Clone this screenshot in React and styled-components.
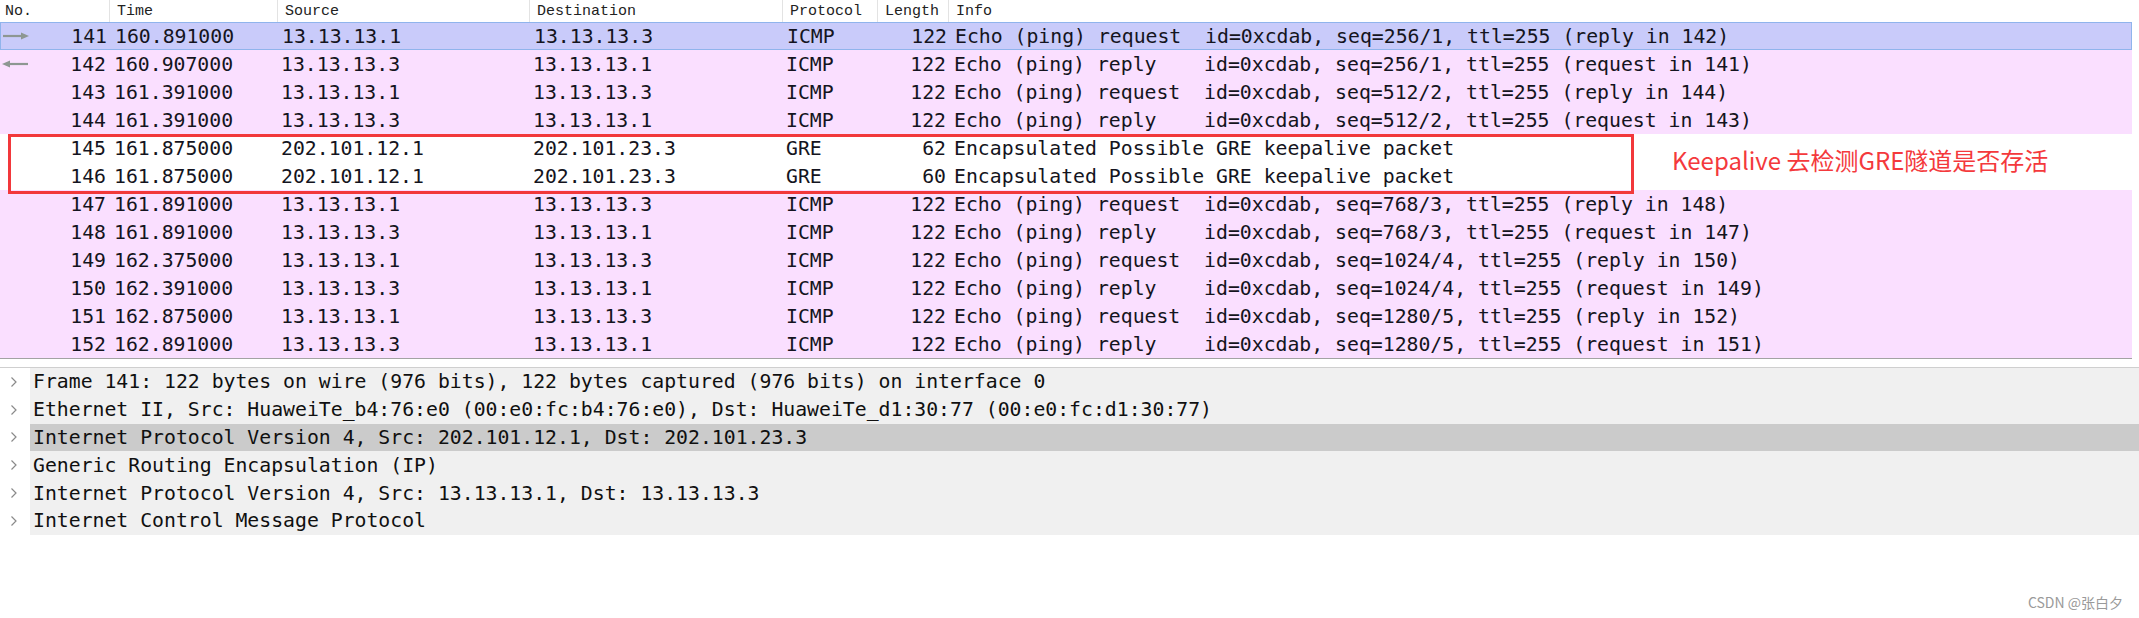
import styled, { createGlobalStyle } from 'styled-components';

const GlobalStyle = createGlobalStyle`
  html, body {
    margin: 0;
    padding: 0;
    background: #ffffff;
  }
`;

const packets = [
  { no: 141, time: '160.891000', src: '13.13.13.1', dst: '13.13.13.3', proto: 'ICMP', len: 122, info: 'Echo (ping) request  id=0xcdab, seq=256/1, ttl=255 (reply in 142)', kind: 'selected', arrow: 'right' },
  { no: 142, time: '160.907000', src: '13.13.13.3', dst: '13.13.13.1', proto: 'ICMP', len: 122, info: 'Echo (ping) reply    id=0xcdab, seq=256/1, ttl=255 (request in 141)', kind: 'icmp', arrow: 'left' },
  { no: 143, time: '161.391000', src: '13.13.13.1', dst: '13.13.13.3', proto: 'ICMP', len: 122, info: 'Echo (ping) request  id=0xcdab, seq=512/2, ttl=255 (reply in 144)', kind: 'icmp' },
  { no: 144, time: '161.391000', src: '13.13.13.3', dst: '13.13.13.1', proto: 'ICMP', len: 122, info: 'Echo (ping) reply    id=0xcdab, seq=512/2, ttl=255 (request in 143)', kind: 'icmp' },
  { no: 145, time: '161.875000', src: '202.101.12.1', dst: '202.101.23.3', proto: 'GRE', len: 62, info: 'Encapsulated Possible GRE keepalive packet', kind: 'plain' },
  { no: 146, time: '161.875000', src: '202.101.12.1', dst: '202.101.23.3', proto: 'GRE', len: 60, info: 'Encapsulated Possible GRE keepalive packet', kind: 'plain' },
  { no: 147, time: '161.891000', src: '13.13.13.1', dst: '13.13.13.3', proto: 'ICMP', len: 122, info: 'Echo (ping) request  id=0xcdab, seq=768/3, ttl=255 (reply in 148)', kind: 'icmp' },
  { no: 148, time: '161.891000', src: '13.13.13.3', dst: '13.13.13.1', proto: 'ICMP', len: 122, info: 'Echo (ping) reply    id=0xcdab, seq=768/3, ttl=255 (request in 147)', kind: 'icmp' },
  { no: 149, time: '162.375000', src: '13.13.13.1', dst: '13.13.13.3', proto: 'ICMP', len: 122, info: 'Echo (ping) request  id=0xcdab, seq=1024/4, ttl=255 (reply in 150)', kind: 'icmp' },
  { no: 150, time: '162.391000', src: '13.13.13.3', dst: '13.13.13.1', proto: 'ICMP', len: 122, info: 'Echo (ping) reply    id=0xcdab, seq=1024/4, ttl=255 (request in 149)', kind: 'icmp' },
  { no: 151, time: '162.875000', src: '13.13.13.1', dst: '13.13.13.3', proto: 'ICMP', len: 122, info: 'Echo (ping) request  id=0xcdab, seq=1280/5, ttl=255 (reply in 152)', kind: 'icmp' },
  { no: 152, time: '162.891000', src: '13.13.13.3', dst: '13.13.13.1', proto: 'ICMP', len: 122, info: 'Echo (ping) reply    id=0xcdab, seq=1280/5, ttl=255 (request in 151)', kind: 'icmp' },
];

const details = [
  'Frame 141: 122 bytes on wire (976 bits), 122 bytes captured (976 bits) on interface 0',
  'Ethernet II, Src: HuaweiTe_b4:76:e0 (00:e0:fc:b4:76:e0), Dst: HuaweiTe_d1:30:77 (00:e0:fc:d1:30:77)',
  'Internet Protocol Version 4, Src: 202.101.12.1, Dst: 202.101.23.3',
  'Generic Routing Encapsulation (IP)',
  'Internet Protocol Version 4, Src: 13.13.13.1, Dst: 13.13.13.3',
  'Internet Control Message Protocol',
];

const columns = '109px 168px 252px 253px 95px 71px 1fr';

const rowBg = {
  selected: '#c9cbfa',
  icmp: '#fadfff',
  plain: '#ffffff',
};

const Page = styled.div`
  position: relative;
  width: 2139px;
  height: 618px;
  overflow: hidden;
  background: #ffffff;
`;

const PacketList = styled.div`
  position: relative;
  width: 2132px;
  border-bottom: 1px solid #a3a3a3;
`;

const HeaderRow = styled.div`
  display: grid;
  grid-template-columns: ${columns};
  height: 22px;
  background: #ffffff;
`;

const HeaderCell = styled.div`
  display: flex;
  align-items: center;
  padding-left: ${(p) => (p.$first ? '5px' : '7px')};
  border-left: ${(p) => (p.$first ? 'none' : '1px solid #e3e3e3')};
  font-family: 'Liberation Mono', monospace;
  font-size: 15px;
  color: #222;
`;

const Row = styled.div`
  display: grid;
  grid-template-columns: ${columns};
  height: 28px;
  box-sizing: border-box;
  background: ${(p) => rowBg[p.$kind]};
  border: ${(p) => (p.$kind === 'selected' ? '1px solid #90b4ec' : 'none')};
  font-family: 'DejaVu Sans Mono', monospace;
  font-size: 19.8px;
  color: #141420;
  white-space: pre;
`;

const Cell = styled.div`
  display: flex;
  align-items: center;
  justify-content: ${(p) => (p.$right ? 'flex-end' : 'flex-start')};
  padding-left: ${(p) => p.$pl || 0}px;
  padding-right: ${(p) => p.$pr || 0}px;
  overflow: hidden;
`;

const NoCell = styled(Cell)`
  position: relative;
`;

const ArrowMark = styled.svg`
  position: absolute;
  left: 1px;
  top: 50%;
  transform: translateY(-50%);
`;

const Splitter = styled.div`
  height: 8px;
  background: #ffffff;
`;

const DetailPane = styled.div`
  border-top: 1px solid #cfcfcf;
  display: flex;
  flex-direction: column;
`;

const DetailRow = styled.div`
  display: flex;
  align-items: center;
  height: 27.8px;
`;

const Chevron = styled.div`
  width: 30px;
  height: 100%;
  display: flex;
  align-items: center;
  padding-left: 10px;
  box-sizing: border-box;
  background: #ffffff;
`;

const DetailText = styled.div`
  flex: 1;
  height: 100%;
  display: flex;
  align-items: center;
  padding-left: 3px;
  background: ${(p) => (p.$active ? '#cbcbcb' : '#f0f0f0')};
  font-family: 'DejaVu Sans Mono', monospace;
  font-size: 19.8px;
  color: #101010;
  white-space: pre;
`;

const Highlight = styled.div`
  position: absolute;
  left: 8px;
  top: 134px;
  width: 1626px;
  height: 60px;
  box-sizing: border-box;
  border: 3px solid #f2383b;
  pointer-events: none;
`;

const Note = styled.div`
  position: absolute;
  left: 1672px;
  top: 144px;
  font-family: 'Noto Sans CJK SC', 'Noto Sans', sans-serif;
  font-size: 24px;
  line-height: 32px;
  color: #f4393c;
  white-space: nowrap;
`;

const Watermark = styled.div`
  position: absolute;
  right: 16px;
  bottom: 6px;
  font-family: 'Noto Sans CJK SC', 'Noto Sans', sans-serif;
  font-size: 14px;
  color: #9a9a9a;
`;

const Arrow = ({ dir }) => (
  <ArrowMark width="28" height="10" viewBox="0 0 28 10">
    {dir === 'right' ? (
      <>
        <line x1="1" y1="5" x2="22" y2="5" stroke="#8d9792" strokeWidth="2.2" />
        <polygon points="19,1.5 27,5 19,8.5" fill="#8d9792" />
      </>
    ) : (
      <>
        <line x1="6" y1="5" x2="27" y2="5" stroke="#8d9792" strokeWidth="2.2" />
        <polygon points="9,1.5 1,5 9,8.5" fill="#8d9792" />
      </>
    )}
  </ArrowMark>
);

const ChevronIcon = () => (
  <svg width="8" height="12" viewBox="0 0 8 12">
    <polyline points="1.5,1.5 6,6 1.5,10.5" fill="none" stroke="#8a8a8a" strokeWidth="1.2" />
  </svg>
);

const App = () => {
  const headers = ['No.', 'Time', 'Source', 'Destination', 'Protocol', 'Length', 'Info'];
  return (
    <Page>
      <GlobalStyle />
      <PacketList>
        <HeaderRow>
          {headers.map((h, i) => (
            <HeaderCell key={h} $first={i === 0}>
              {h}
            </HeaderCell>
          ))}
        </HeaderRow>
        {packets.map((p) => (
          <Row key={p.no} $kind={p.kind}>
            <NoCell $right $pr={3}>
              {p.arrow && <Arrow dir={p.arrow} />}
              {p.no}
            </NoCell>
            <Cell $pl={5}>{p.time}</Cell>
            <Cell $pl={4}>{p.src}</Cell>
            <Cell $pl={4}>{p.dst}</Cell>
            <Cell $pl={4}>{p.proto}</Cell>
            <Cell $right $pr={2}>{p.len}</Cell>
            <Cell $pl={6}>{p.info}</Cell>
          </Row>
        ))}
        <Highlight />
      </PacketList>
      <Splitter />
      <DetailPane>
        {details.map((d, i) => (
          <DetailRow key={d}>
            <Chevron>
              <ChevronIcon />
            </Chevron>
            <DetailText $active={i === 2}>{d}</DetailText>
          </DetailRow>
        ))}
      </DetailPane>
      <Note>Keepalive 去检测GRE隧道是否存活</Note>
      <Watermark>CSDN @张白夕</Watermark>
    </Page>
  );
};

export default App;
